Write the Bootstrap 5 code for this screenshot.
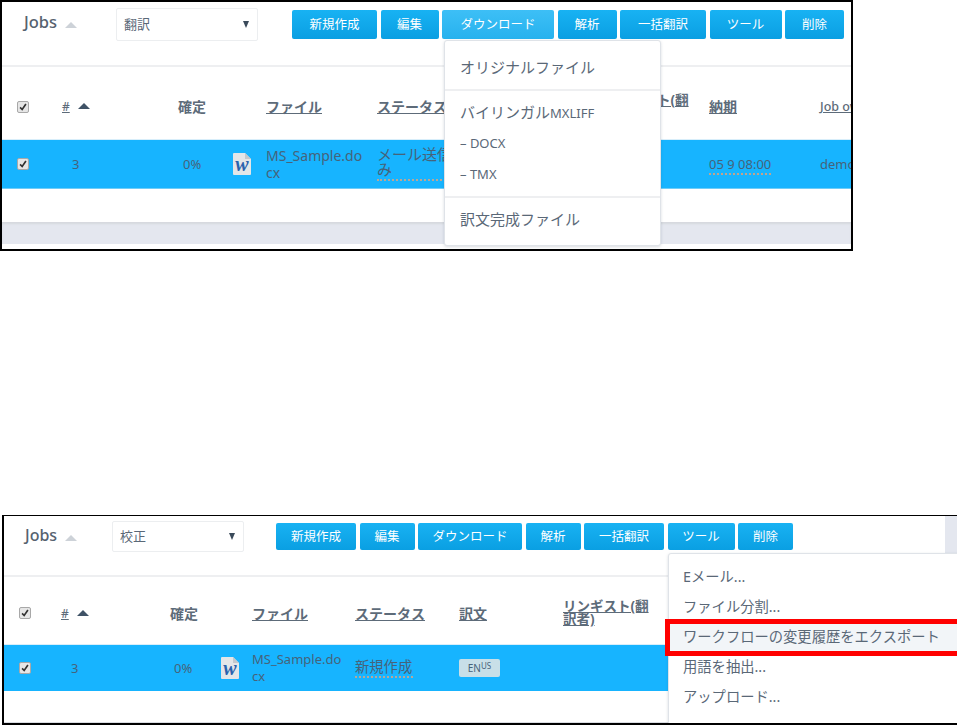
<!DOCTYPE html>
<html lang="ja">
<head>
  <meta charset="UTF-8" />
  <meta name="viewport" content="width=device-width, initial-scale=1.0"/>
  <link href="https://cdn.jsdelivr.net/npm/bootstrap@5.3.3/dist/css/bootstrap.min.css" rel="stylesheet"/>
  <script src="https://cdn.jsdelivr.net/npm/bootstrap@5.3.3/dist/js/bootstrap.bundle.min.js"></script>
  <title>Jobs</title>
  <style>
    body {
      background: #fff;
      color: #5a6877;
      font-family: "Noto Sans", "Noto Sans CJK JP", sans-serif;
      height: 725px;
      overflow: hidden;
    }

    .shot {
      position: relative;
      overflow: hidden;
      background: #fff;
      border: 2px solid #000;
    }

    .shot-top {
      width: 853px;
      height: 251px;
    }

    .shot-bottom {
      width: 955px;
      height: 210px;
      margin: 264px 0 0 2px;
      border-width: 1px 0 2px 2px;
    }

    .tool-row {
      height: 65px;
      border-bottom: 2px solid #eeeff1;
      padding-top: 6px;
    }

    .shot-bottom .tool-row {
      height: 61px;
      padding-top: 5px;
    }

    .jobs-title {
      font-size: 16.5px;
      font-weight: 500;
      line-height: 18px;
      padding: 5px 0 0 22px;
      width: 114px;
      color: #56626f;
    }

    .shot-bottom .jobs-title {
      font-size: 16px;
      padding-left: 21px;
      width: 108px;
    }

    .tri {
      display: inline-block;
      width: 0;
      height: 0;
      border-left: 6px solid transparent;
      border-right: 6px solid transparent;
      border-bottom: 6px solid #cdd2d8;
      margin-left: 8px;
      vertical-align: 0;
    }

    .tri-dark {
      border-bottom-color: #3f5266;
      margin-left: 8px;
      vertical-align: 2px;
    }

    .lang-select {
      width: 142px;
      height: 33px;
      border: 1px solid #eceef0;
      border-radius: 2px;
      font-size: 13px;
      padding: 0 8px 0 7px;
      margin-right: 34px;
      color: #5a6877;
    }

    .shot-bottom .lang-select {
      width: 132px;
      height: 31px;
      margin-right: 32px;
    }

    .lang-select::after {
      content: "";
      border-left: 3.5px solid transparent;
      border-right: 3.5px solid transparent;
      border-top: 7px solid #3a4a5a;
    }

    .tool-btns {
      gap: 3.5px;
      padding-top: 2px;
    }

    .btn-blue {
      height: 29px;
      padding: 0;
      font-size: 12.5px;
      line-height: 28px;
      color: #fff;
      border: 0;
      border-radius: 2px;
      background: linear-gradient(#18b2f3, #0a9fe2);
    }

    .shot-bottom .btn-blue {
      height: 27px;
      line-height: 26px;
    }

    .btn-blue.btn-open {
      background: linear-gradient(#3dbff6, #27b2ee);
    }

    .job-grid {
      display: grid;
      align-items: center;
    }

    .shot-top .job-grid {
      grid-template-columns: 45px 116px 55px 33px 111px 226px 106px 111px 110px;
      padding-left: 15px;
      width: 1000px;
    }

    .shot-bottom .job-grid {
      grid-template-columns: 42px 109px 51px 31px 103px 104px 104px 90px;
      padding-left: 15px;
      width: 700px;
    }

    .head-row {
      height: 72px;
      padding-top: 7px;
      font-size: 14px;
      font-weight: 700;
      line-height: 13px;
      color: #5d6b79;
    }

    .shot-bottom .head-row {
      height: 67px;
      padding-top: 5px;
    }

    .head-row a {
      color: #5d6b79;
    }

    .head-small {
      font-size: 12px;
      font-weight: 500;
    }

    .head-thin {
      font-weight: 500;
      font-size: 12.5px;
    }

    .job-row {
      height: 50px;
      background: #17b4ff;
      font-size: 13px;
      line-height: 17px;
      color: #46637a;
      border-top: 1px solid #d8eefa;
      border-bottom: 1px solid #6fcdf8;
    }

    .shot-bottom .job-row {
      height: 47px;
      border-bottom: 0;
    }

    .num-cell {
      padding-left: 10px;
    }

    .pct-cell {
      padding-left: 5px;
    }

    .pct-cell-low {
      padding-left: 4px;
    }

    .file-cell {
      word-break: break-all;
      width: 97px;
      font-size: 14px;
    }

    .shot-bottom .file-cell {
      width: 92px;
      font-size: 13px;
    }

    .status-cell {
      font-size: 15px;
      line-height: 15px;
    }

    .status-cell span {
      display: inline-block;
      width: 100px;
      padding-bottom: 2px;
      border-bottom: 2px dotted #b9a797;
    }

    .shot-bottom .status-cell span {
      width: 58px;
      font-size: 14.3px;
    }

    .due-cell span {
      border-bottom: 2px dotted #c2a48e;
    }

    .ling-head {
      width: 90px;
      font-size: 13.5px;
      word-break: break-all;
    }

    .lang-tag {
      display: inline-block;
      width: 41px;
      height: 18px;
      line-height: 18px;
      text-align: center;
      background: #c8dfe8;
      border-radius: 2px;
      font-size: 10px;
    }

    .lang-tag sup {
      font-size: 8px;
      top: -3px;
    }

    .tick {
      appearance: none;
      display: block;
      width: 12px;
      height: 12px;
      margin: 0;
      border: 1px solid #a8a8a8;
      border-radius: 2px;
      background: #e6e6e6 url("data:image/svg+xml,%3Csvg xmlns='http://www.w3.org/2000/svg' viewBox='0 0 12 12'%3E%3Cpath d='M2.5 6.5 5 9l4.5-6.5' fill='none' stroke='%23333' stroke-width='2'/%3E%3C/svg%3E") center/10px no-repeat;
    }

    .doc-icon {
      display: block;
      width: 18px;
      height: 22px;
    }

    .foot-band {
      margin-top: 33px;
      height: 22px;
      background: #e4e7ef;
      box-shadow: inset 0 2px 2px #d6d9de;
    }

    .bottom-line {
      margin-top: 31px;
      height: 1px;
      background: #d9dce2;
    }

    .scroll-strip {
      position: absolute;
      top: 0;
      right: 0;
      width: 12px;
      height: 37px;
      background: #e4e7ef;
    }

    .menu-box {
      position: absolute;
      display: block;
      margin: 0;
      padding: 0;
      min-width: 0;
      background: #fff;
      border: 1px solid #dfe3e8;
      border-radius: 3px;
      box-shadow: 0 1px 3px rgba(70, 80, 100, .2);
      color: #5a6877;
      font-weight: 300;
    }

    .menu-dl {
      left: 442px;
      top: 38px;
      width: 217px;
      height: 206px;
      padding-top: 11px;
    }

    .menu-dl .dropdown-item {
      color: #5a6877;
      padding: 0 0 0 15px;
      height: 31px;
      line-height: 30px;
      font-size: 15px;
    }

    .menu-dl .item-sm,
    .menu-dl .latin-sm {
      font-size: 13px;
    }

    .menu-dl .dropdown-divider {
      margin: 6px 0;
      border-top: 2px solid #eeeff1;
      opacity: 1;
    }

    .menu-tools {
      left: 664px;
      top: 37px;
      width: 295px;
      height: 172px;
      padding-top: 8px;
    }

    .menu-tools .dropdown-item {
      color: #5a6877;
      padding: 0 0 0 14px;
      height: 30px;
      line-height: 29px;
      font-size: 14.3px;
    }

    .menu-tools .item-marked {
      position: relative;
      background: #f2f5f8;
      margin-left: -2px;
      padding-left: 16px;
      outline: 5px solid #f00;
      outline-offset: -3px;
      height: 33px;
      margin-top: -1px;
      margin-bottom: -2px;
      line-height: 32px;
    }
  </style>
</head>
<body>
  <div class="shot shot-top">
    <div class="tool-row d-flex align-items-start">
      <div class="jobs-title">Jobs<span class="tri"></span></div>
      <div class="lang-select d-flex align-items-center justify-content-between">翻訳</div>
      <div class="tool-btns d-flex">
        <button class="btn btn-blue" style="width: 85px">新規作成</button>
        <button class="btn btn-blue" style="width: 58px">編集</button>
        <button class="btn btn-blue btn-open" style="width: 112px">ダウンロード</button>
        <button class="btn btn-blue" style="width: 59px">解析</button>
        <button class="btn btn-blue" style="width: 86px">一括翻訳</button>
        <button class="btn btn-blue" style="width: 72px">ツール</button>
        <button class="btn btn-blue" style="width: 59px">削除</button>
      </div>
    </div>

    <div class="job-grid head-row">
      <div><input class="tick" type="checkbox" checked /></div>
      <div class="head-small"><a href="#">#</a><span class="tri tri-dark"></span></div>
      <div>確定</div>
      <div></div>
      <div><a href="#">ファイル</a></div>
      <div><a href="#">ステータス</a></div>
      <div class="ling-head"><a href="#">リンギスト(翻訳者)</a></div>
      <div><a href="#">納期</a></div>
      <div class="head-thin"><a href="#">Job owner</a></div>
    </div>

    <div class="job-grid job-row">
      <div><input class="tick" type="checkbox" checked /></div>
      <div class="num-cell">3</div>
      <div class="pct-cell">0%</div>
      <div>
        <svg class="doc-icon" viewBox="0 0 18 22"><path d="M1 0h11l6 6v15a1 1 0 0 1-1 1H1a1 1 0 0 1-1-1V1a1 1 0 0 1 1-1z" fill="#e3e6e8"/><path d="M12 0l6 6h-6z" fill="#c3c8cc"/><text x="9" y="18" text-anchor="middle" font-family="Liberation Serif" font-style="italic" font-weight="700" font-size="20" fill="#2a62ad">w</text></svg>
      </div>
      <div class="file-cell">MS_Sample.docx</div>
      <div class="status-cell"><span>メール送信済み</span></div>
      <div></div>
      <div class="due-cell"><span>05 9 08:00</span></div>
      <div>demo</div>
    </div>

    <div class="foot-band"></div>

    <div class="dropdown-menu menu-box menu-dl">
      <a class="dropdown-item" href="#">オリジナルファイル</a>
      <div class="dropdown-divider"></div>
      <a class="dropdown-item" href="#">バイリンガル<span class="latin-sm">MXLIFF</span></a>
      <a class="dropdown-item item-sm" href="#">– DOCX</a>
      <a class="dropdown-item item-sm" href="#">– TMX</a>
      <div class="dropdown-divider"></div>
      <a class="dropdown-item" href="#">訳文完成ファイル</a>
    </div>
  </div>

  <div class="shot shot-bottom">
    <div class="tool-row d-flex align-items-start">
      <div class="jobs-title">Jobs<span class="tri"></span></div>
      <div class="lang-select d-flex align-items-center justify-content-between">校正</div>
      <div class="tool-btns d-flex">
        <button class="btn btn-blue" style="width: 80px">新規作成</button>
        <button class="btn btn-blue" style="width: 55px">編集</button>
        <button class="btn btn-blue" style="width: 104px">ダウンロード</button>
        <button class="btn btn-blue" style="width: 55px">解析</button>
        <button class="btn btn-blue" style="width: 80px">一括翻訳</button>
        <button class="btn btn-blue" style="width: 67px">ツール</button>
        <button class="btn btn-blue" style="width: 55px">削除</button>
      </div>
    </div>

    <div class="job-grid head-row">
      <div><input class="tick" type="checkbox" checked /></div>
      <div class="head-small"><a href="#">#</a><span class="tri tri-dark"></span></div>
      <div>確定</div>
      <div></div>
      <div><a href="#">ファイル</a></div>
      <div><a href="#">ステータス</a></div>
      <div><a href="#">訳文</a></div>
      <div class="ling-head"><a href="#">リンギスト(翻訳者)</a></div>
    </div>

    <div class="job-grid job-row">
      <div><input class="tick" type="checkbox" checked /></div>
      <div class="num-cell">3</div>
      <div class="pct-cell-low">0%</div>
      <div>
        <svg class="doc-icon" viewBox="0 0 18 22"><path d="M1 0h11l6 6v15a1 1 0 0 1-1 1H1a1 1 0 0 1-1-1V1a1 1 0 0 1 1-1z" fill="#e3e6e8"/><path d="M12 0l6 6h-6z" fill="#c3c8cc"/><text x="9" y="18" text-anchor="middle" font-family="Liberation Serif" font-style="italic" font-weight="700" font-size="20" fill="#2a62ad">w</text></svg>
      </div>
      <div class="file-cell">MS_Sample.docx</div>
      <div class="status-cell"><span>新規作成</span></div>
      <div><span class="lang-tag">EN<sup>US</sup></span></div>
      <div></div>
    </div>

    <div class="bottom-line"></div>

    <div class="scroll-strip"></div>

    <div class="dropdown-menu menu-box menu-tools">
      <a class="dropdown-item" href="#">Eメール...</a>
      <a class="dropdown-item" href="#">ファイル分割...</a>
      <a class="dropdown-item item-marked" href="#">ワークフローの変更履歴をエクスポート</a>
      <a class="dropdown-item" href="#">用語を抽出...</a>
      <a class="dropdown-item" href="#">アップロード...</a>
    </div>
  </div>
</body>
</html>
